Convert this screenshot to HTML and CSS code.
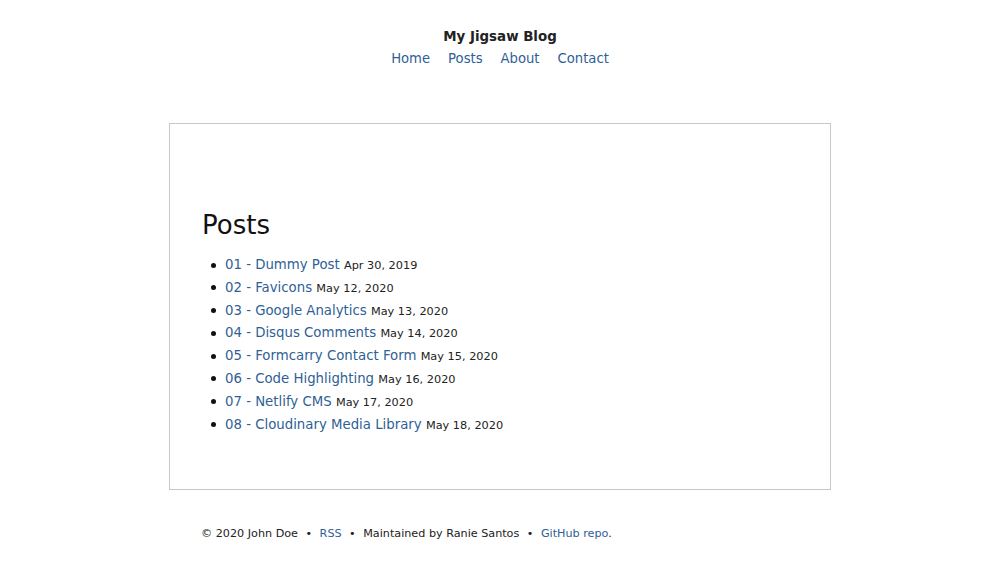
FILE: index.html
```html
<!DOCTYPE html>
<html lang="en">
<head>
<meta charset="utf-8">
<title>Posts - My Jigsaw Blog</title>
<link rel="stylesheet" href="styles.css">
</head>
<body>
<header class="site-header">
  <div class="site-title">My Jigsaw Blog</div>
  <nav class="site-nav">
    <a href="#">Home</a>
    <a href="#">Posts</a>
    <a href="#">About</a>
    <a href="#">Contact</a>
  </nav>
</header>
<main class="content">
  <h1 class="page-title">Posts</h1>
  <ul class="post-list">
    <li><a href="#">01 - Dummy Post</a> <span class="date">Apr 30, 2019</span></li>
    <li><a href="#">02 - Favicons</a> <span class="date">May 12, 2020</span></li>
    <li><a href="#">03 - Google Analytics</a> <span class="date">May 13, 2020</span></li>
    <li><a href="#">04 - Disqus Comments</a> <span class="date">May 14, 2020</span></li>
    <li><a href="#">05 - Formcarry Contact Form</a> <span class="date">May 15, 2020</span></li>
    <li><a href="#">06 - Code Highlighting</a> <span class="date">May 16, 2020</span></li>
    <li><a href="#">07 - Netlify CMS</a> <span class="date">May 17, 2020</span></li>
    <li><a href="#">08 - Cloudinary Media Library</a> <span class="date">May 18, 2020</span></li>
  </ul>
</main>
<footer class="site-footer">
  <span>© 2020 John Doe</span><span class="sep">•</span><a href="#">RSS</a><span class="sep">•</span><span>Maintained by Ranie Santos</span><span class="sep">•</span><a href="#">GitHub repo</a>.
</footer>
</body>
</html>
```
FILE: styles.css
```css
* { box-sizing: border-box; }
body {
  margin: 0;
  font-family: "DejaVu Sans", sans-serif;
  color: #222;
  background: #fff;
}
a { color: #2f5f96; text-decoration: none; }
.site-header {
  padding-top: 28px;
  text-align: center;
}
.site-title {
  font-weight: bold;
  font-size: 13.4px;
  line-height: 18px;
}
.site-nav {
  display: flex;
  justify-content: center;
  gap: 18px;
  margin-top: 3px;
  font-size: 13.2px;
  line-height: 20px;
}
.content {
  width: 662px;
  margin: 54px auto 0;
  border: 1px solid #c8c8c8;
  padding: 85px 32px 48px;
  height: 367px;
}
.page-title {
  margin: 0 0 13px;
  font-size: 26px;
  font-weight: normal;
  line-height: 32px;
  color: #111;
}
.post-list {
  margin: 0;
  padding-left: 23px;
  list-style: none;
  font-size: 13.3px;
  line-height: 22.8px;
}
.post-list li::before {
  content: "";
  display: inline-block;
  width: 5px;
  height: 5px;
  border-radius: 50%;
  background: #111;
  margin-left: -14px;
  margin-right: 9px;
  vertical-align: middle;
}
.post-list a { line-height: 1; }
.post-list .date {
  font-size: 11.3px;
  line-height: 1;
  color: #222;
}
.site-footer {
  width: 662px;
  margin: 37px auto 0;
  padding-left: 32px;
  font-size: 11.2px;
  color: #222;
}
.sep { margin: 0 7.5px; }
```
